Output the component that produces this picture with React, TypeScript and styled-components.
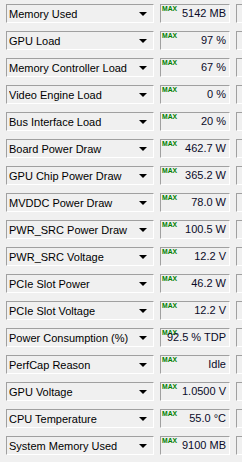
import React from 'react';
import styled, { createGlobalStyle } from 'styled-components';

const GlobalStyle = createGlobalStyle`
  html, body {
    margin: 0;
    padding: 0;
    background: #f0f0f0;
    overflow: hidden;
  }
  body {
    font-family: 'Liberation Sans', Arial, sans-serif;
  }
`;

interface SensorRow {
  label: string;
  value: string;
}

const sensors: SensorRow[] = [
  { label: 'Memory Used', value: '5142 MB' },
  { label: 'GPU Load', value: '97 %' },
  { label: 'Memory Controller Load', value: '67 %' },
  { label: 'Video Engine Load', value: '0 %' },
  { label: 'Bus Interface Load', value: '20 %' },
  { label: 'Board Power Draw', value: '462.7 W' },
  { label: 'GPU Chip Power Draw', value: '365.2 W' },
  { label: 'MVDDC Power Draw', value: '78.0 W' },
  { label: 'PWR_SRC Power Draw', value: '100.5 W' },
  { label: 'PWR_SRC Voltage', value: '12.2 V' },
  { label: 'PCIe Slot Power', value: '46.2 W' },
  { label: 'PCIe Slot Voltage', value: '12.2 V' },
  { label: 'Power Consumption (%)', value: '92.5 % TDP' },
  { label: 'PerfCap Reason', value: 'Idle' },
  { label: 'GPU Voltage', value: '1.0500 V' },
  { label: 'CPU Temperature', value: '55.0 °C' },
  { label: 'System Memory Used', value: '9100 MB' },
];

const StyledPanel = styled.div`
  box-sizing: border-box;
  display: grid;
  grid-template-columns: 148px 70px 40px;
  grid-auto-rows: 19px;
  column-gap: 6px;
  row-gap: 8px;
  padding: 4px 0 6px 6px;
  width: 242px;
  overflow: hidden;
`;

const SunkenBox = styled.div`
  box-sizing: border-box;
  border-top: 1px solid #a0a0a0;
  border-left: 1px solid #a0a0a0;
  border-right: 1px solid #ffffff;
  border-bottom: 1px solid #ffffff;
  background: #f0f0f0;
`;

const StyledCombo = styled(SunkenBox)`
  display: flex;
  align-items: center;
  padding: 0 6px 0 2px;
  font-size: 11px;
  color: #000;
`;

const StyledComboLabel = styled.span`
  flex: 1;
  white-space: nowrap;
  overflow: hidden;
`;

const StyledArrow = styled.span`
  flex: none;
  width: 0;
  height: 0;
  margin-left: 4px;
  border-left: 4px solid transparent;
  border-right: 4px solid transparent;
  border-top: 4px solid #000;
`;

const StyledValueBox = styled(SunkenBox)`
  position: relative;
  display: flex;
  align-items: flex-end;
  justify-content: flex-end;
  padding: 0 3px 2px 0;
  font-size: 11px;
  line-height: 13px;
  color: #0a0a28;
  white-space: nowrap;
`;

const StyledMax = styled.span`
  position: absolute;
  left: 1px;
  top: 0;
  font-weight: bold;
  font-size: 6.8px;
  line-height: 7px;
  color: #008000;
`;

const StyledValueText = styled.span`
  position: relative;
`;

const StyledGraph = styled(SunkenBox)``;

export default function App() {
  return (
    <>
      <GlobalStyle />
      <StyledPanel>
        {sensors.map((s) => (
          <React.Fragment key={s.label}>
            <StyledCombo>
              <StyledComboLabel>{s.label}</StyledComboLabel>
              <StyledArrow />
            </StyledCombo>
            <StyledValueBox>
              <StyledMax>MAX</StyledMax>
              <StyledValueText>{s.value}</StyledValueText>
            </StyledValueBox>
            <StyledGraph />
          </React.Fragment>
        ))}
      </StyledPanel>
    </>
  );
}
